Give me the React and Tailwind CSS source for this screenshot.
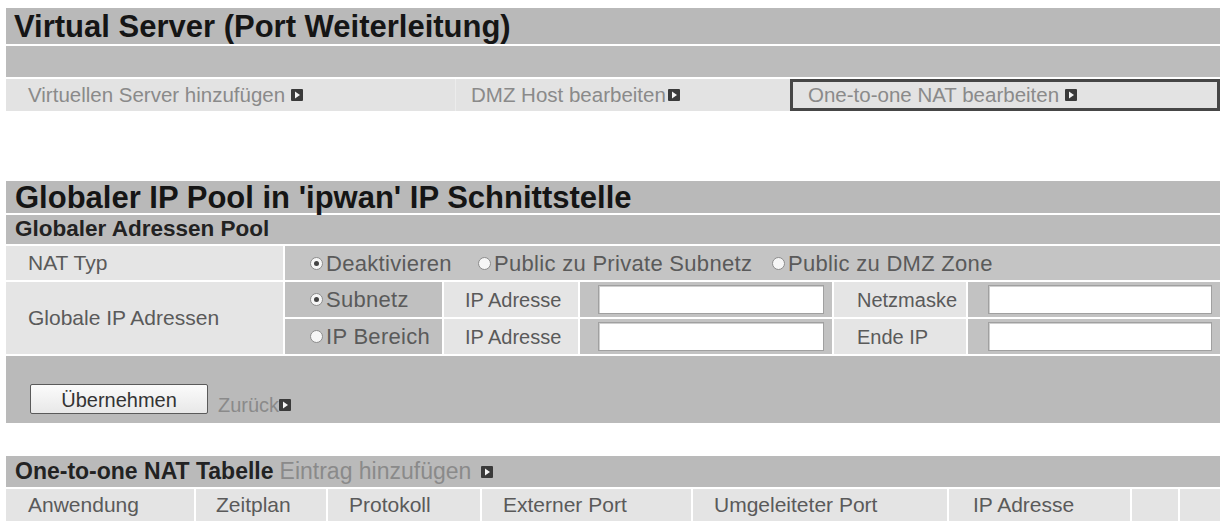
import React from "react";

const font = { fontFamily: "'Liberation Sans', Arial, sans-serif" };

function Arrow({ className = "" }) {
  return (
    <svg
      className={"inline-block shrink-0 " + className}
      width="12"
      height="12"
      viewBox="0 0 12 12"
    >
      <rect x="0" y="0" width="12" height="12" rx="1" fill="#3a3a3a" />
      <path d="M4 2.5 L9 6 L4 9.5 Z" fill="#f4f4f4" />
    </svg>
  );
}

function Radio({ checked, label }) {
  return (
    <span className="flex items-center text-[22px] tracking-[0.3px]">
      <span className="w-[13px] h-[13px] rounded-full border border-[#8c8c8c] bg-[#f6f6f6] flex items-center justify-center mr-[3px]">
        {checked && <span className="w-[5px] h-[5px] rounded-full bg-[#444]" />}
      </span>
      <span>{label}</span>
    </span>
  );
}

function Field() {
  return (
    <div className="h-[29px] bg-white border border-[#a0a0a0] shadow-[inset_1px_1px_0_#cfcfcf]" />
  );
}

export default function App() {
  return (
    <div className="bg-white w-[1223px] h-[526px] pt-[8px] pl-[6px] overflow-hidden" style={font}>
      <div className="w-[1214px] flex flex-col">
        {/* Virtual Server */}
        <div className="h-[36px] bg-[#b9b9b9] flex items-center pl-[8px]">
          <div className="text-[31px] font-bold leading-none text-[#151515]">
            Virtual Server (Port Weiterleitung)
          </div>
        </div>
        <div className="mt-[2px] h-[31px] bg-[#bcbcbc]" />
        <div className="mt-[2px] h-[32px] flex bg-[#e3e3e3] text-[20.5px] text-[#8a8a8a]">
          <div className="w-[449px] flex items-center pl-[22px] gap-[6px]">
            Virtuellen Server hinzufügen <Arrow />
          </div>
          <div className="w-[335px] flex items-center pl-[15px] gap-[2px] border-l border-[#ececec]">
            DMZ Host bearbeiten<Arrow />
          </div>
          <div className="flex-1 border-[3px] border-[#464646] flex items-center pl-[15px] gap-[6px]">
            One-to-one NAT bearbeiten <Arrow />
          </div>
        </div>

        {/* Globaler IP Pool */}
        <div className="mt-[70px] h-[32px] bg-[#b9b9b9] flex items-center pl-[9px]">
          <div className="text-[31px] font-bold leading-none text-[#151515]">
            Globaler IP Pool in 'ipwan' IP Schnittstelle
          </div>
        </div>
        <div className="mt-[2px] h-[29px] bg-[#bbbbbb] flex items-center pl-[9px]">
          <div className="text-[22.5px] font-bold leading-none text-[#222]">
            Globaler Adressen Pool
          </div>
        </div>

        <div className="mt-[2px] h-[34px] flex gap-[2px] text-[21px] text-[#5a5a5a]">
          <div className="w-[277px] bg-[#e5e5e5] flex items-center pl-[22px]">NAT Typ</div>
          <div className="flex-1 bg-[#c4c4c4] flex items-center pl-[25px]">
            <div className="w-[168px]">
              <Radio checked label="Deaktivieren" />
            </div>
            <div className="w-[294px]">
              <Radio label="Public zu Private Subnetz" />
            </div>
            <Radio label="Public zu DMZ Zone" />
          </div>
        </div>

        <div className="mt-[2px] flex gap-[2px] text-[20px] text-[#5a5a5a]">
          <div className="w-[277px] bg-[#e5e5e5] flex items-center pl-[22px] text-[21px]">
            Globale IP Adressen
          </div>
          <div className="flex-1 flex flex-col gap-[2px]">
            <div className="h-[35px] flex gap-[2px]">
              <div className="w-[157px] bg-[#c0c0c0] flex items-center pl-[25px]">
                <Radio checked label="Subnetz" />
              </div>
              <div className="w-[134px] bg-[#e5e5e5] flex items-center pl-[21px]">IP Adresse</div>
              <div className="w-[252px] bg-[#c2c2c2] flex items-center pl-[18px] pr-[8px]">
                <div className="flex-1"><Field /></div>
              </div>
              <div className="w-[132px] bg-[#e5e5e5] flex items-center pl-[23px]">Netzmaske</div>
              <div className="flex-1 bg-[#c2c2c2] flex items-center pl-[20px] pr-[8px]">
                <div className="flex-1"><Field /></div>
              </div>
            </div>
            <div className="h-[35px] flex gap-[2px]">
              <div className="w-[157px] bg-[#c0c0c0] flex items-center pl-[25px]">
                <Radio label="IP Bereich" />
              </div>
              <div className="w-[134px] bg-[#e5e5e5] flex items-center pl-[21px]">IP Adresse</div>
              <div className="w-[252px] bg-[#c2c2c2] flex items-center pl-[18px] pr-[8px]">
                <div className="flex-1"><Field /></div>
              </div>
              <div className="w-[132px] bg-[#e5e5e5] flex items-center pl-[23px]">Ende IP</div>
              <div className="flex-1 bg-[#c2c2c2] flex items-center pl-[20px] pr-[8px]">
                <div className="flex-1"><Field /></div>
              </div>
            </div>
          </div>
        </div>

        <div className="mt-[2px] h-[67px] bg-[#bababa] flex items-start pt-[28px] pl-[24px] text-[20px]">
          <button className="w-[178px] h-[30px] bg-gradient-to-b from-[#fbfbfb] to-[#e8e8e8] border border-[#5a5a5a] rounded-[2px] text-[#333]">
            Übernehmen
          </button>
          <span className="ml-[10px] mt-[6px] flex items-center text-[#8a8a8a]">
            Zurück<Arrow />
          </span>
        </div>

        {/* One-to-one NAT Tabelle */}
        <div className="mt-[33px] h-[31px] bg-[#bababa] flex items-center pl-[9px] text-[23px] leading-none">
          <span className="font-bold text-[#222]">One-to-one NAT Tabelle</span>
          <span className="ml-[6px] text-[#8a8a8a]">Eintrag hinzufügen</span>
          <Arrow className="ml-[10px]" />
        </div>
        <div className="mt-[2px] h-[32px] flex gap-[2px] text-[21px] text-[#5a5a5a]">
          <div className="w-[188px] bg-[#e4e4e4] flex items-center pl-[22px]">Anwendung</div>
          <div className="w-[130px] bg-[#e4e4e4] flex items-center pl-[20px]">Zeitplan</div>
          <div className="w-[152px] bg-[#e4e4e4] flex items-center pl-[21px]">Protokoll</div>
          <div className="w-[209px] bg-[#e4e4e4] flex items-center pl-[21px]">Externer Port</div>
          <div className="w-[254px] bg-[#e4e4e4] flex items-center pl-[21px]">Umgeleiteter Port</div>
          <div className="w-[181px] bg-[#e4e4e4] flex items-center pl-[24px]">IP Adresse</div>
          <div className="w-[46px] bg-[#e4e4e4]" />
          <div className="flex-1 bg-[#e4e4e4]" />
        </div>
      </div>
    </div>
  );
}
